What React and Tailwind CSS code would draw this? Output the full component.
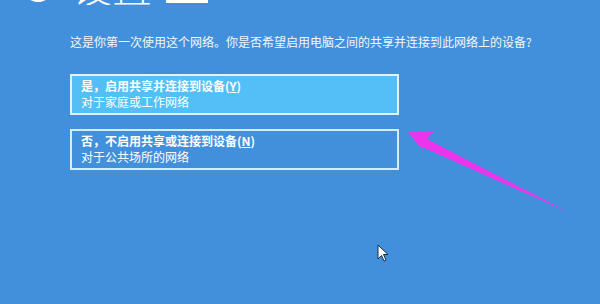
export default function App() {
  const font = { fontFamily: '"Microsoft YaHei", "Noto Sans CJK SC", sans-serif' };
  return (
    <div className="relative w-[600px] h-[304px] overflow-hidden bg-[#4290dc] text-white" style={font}>
      {/* cropped heading */}
      <div className="flex items-end gap-[14px] pl-[18px] h-[5px] overflow-hidden">
        <span className="text-[40px] leading-[40px] font-light">⊖</span>
        <span className="text-[40px] leading-[40px] font-light">设置</span>
        <span className="w-[42px] h-[6px] bg-white mb-[2px]" />
      </div>

      <div className="pl-[70px] pt-[29px]">
        <p className="text-[12px] leading-[16px] text-[#f2f7fd]">
          这是你第一次使用这个网络。你是否希望启用电脑之间的共享并连接到此网络上的设备?
        </p>

        <div className="mt-[24px] w-[329px] h-[41px] border-2 border-[#dff3fd] bg-[#52bff6] pl-[9px] pt-[2px] text-[12px] leading-[16px]">
          <div className="font-bold">是，启用共享并连接到设备(<span className="underline">Y</span>)</div>
          <div>对于家庭或工作网络</div>
        </div>

        <div className="mt-[14px] w-[329px] h-[41px] border-2 border-[#d6ecfb] pl-[9px] pt-[2px] text-[12px] leading-[16px]">
          <div className="font-bold">否，不启用共享或连接到设备(<span className="underline">N</span>)</div>
          <div>对于公共场所的网络</div>
        </div>
      </div>

      {/* annotation arrow */}
      <svg className="absolute left-0 top-0" width="600" height="304">
        <polygon points="408,132 434,131 427,139 568,212 420,146 424,152" fill="#ec34ec" />
      </svg>

      {/* mouse cursor */}
      <svg className="absolute left-[377px] top-[244px]" width="12" height="19" viewBox="0 0 12 19">
        <path d="M1 1 L1 15 L4.5 11.5 L7 17 L9 16 L6.5 10.5 L11 10.5 Z" fill="#fff" stroke="#1a2a40" strokeWidth="1" />
      </svg>
    </div>
  );
}
